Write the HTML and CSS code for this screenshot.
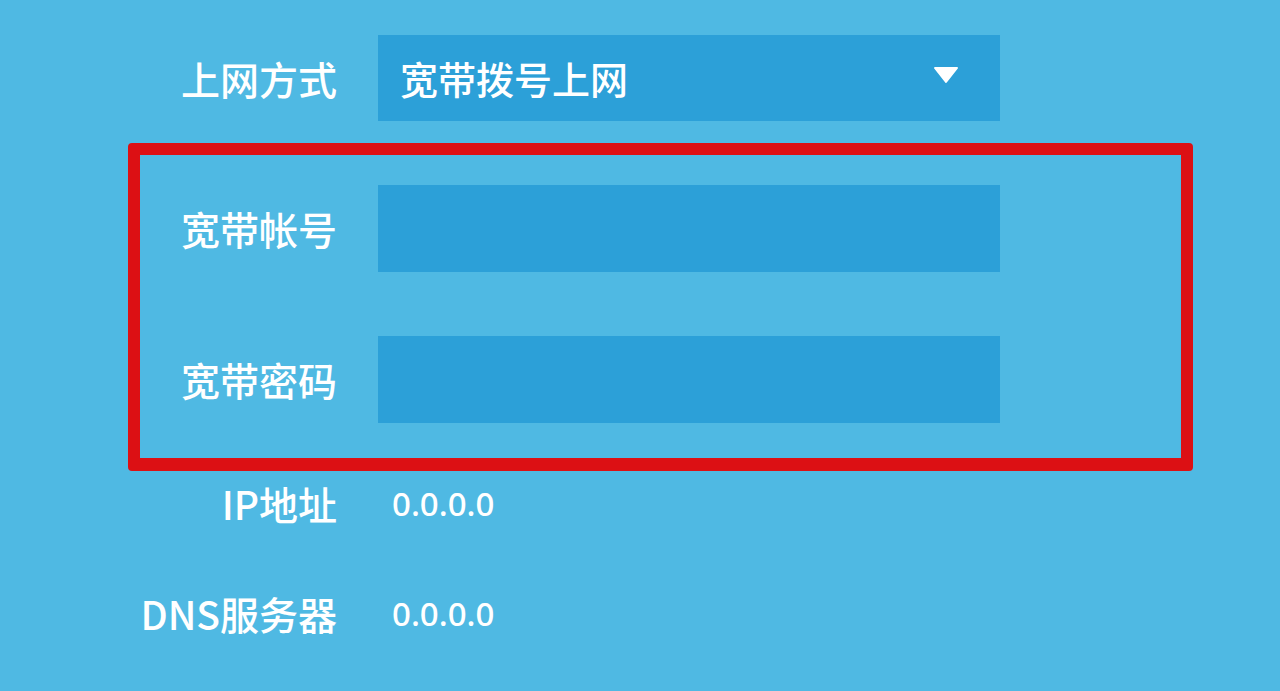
FILE: index.html
```html
<!DOCTYPE html>
<html lang="zh-CN">
<head>
<meta charset="utf-8">
<title>上网设置</title>
<link rel="stylesheet" href="styles.css">
</head>
<body>
<main class="page">
  <div class="row row-out">
    <div class="label">上网方式</div>
    <div class="field select">
      <span class="select-text">宽带拨号上网</span>
      <svg class="caret" width="26" height="18" viewBox="0 0 26 18" aria-hidden="true">
        <path d="M2 2 L24 2 L13 16 Z" fill="#ffffff" stroke="#ffffff" stroke-width="2" stroke-linejoin="round"/>
      </svg>
    </div>
  </div>

  <section class="highlight">
    <div class="row row-in">
      <div class="label">宽带帐号</div>
      <div class="field input"></div>
    </div>
    <div class="row row-in">
      <div class="label">宽带密码</div>
      <div class="field input"></div>
    </div>
  </section>

  <div class="row row-out info first">
    <div class="label">IP地址</div>
    <div class="value">0.0.0.0</div>
  </div>
  <div class="row row-out info">
    <div class="label">DNS服务器</div>
    <div class="value">0.0.0.0</div>
  </div>
</main>
</body>
</html>
```
FILE: styles.css
```css
html, body {
  margin: 0;
  padding: 0;
}
body {
  width: 1280px;
  height: 691px;
  overflow: hidden;
  background: #4fb9e3;
  font-family: "Noto Sans CJK SC", "Noto Sans", sans-serif;
  color: #ffffff;
}
.page {
  padding-top: 35px;
}
.row {
  display: flex;
  align-items: center;
  gap: 41px;
}
.row-out {
  padding-left: 117px;
}
.row-out .label {
  width: 220px;
}
.row-in .label {
  width: 197px;
}
.label {
  text-align: right;
  font-size: 39px;
  font-weight: 500;
  line-height: 1;
  white-space: nowrap;
}
.field {
  width: 622px;
  height: 86px;
  background: #2ca0d8;
  box-sizing: border-box;
}
.select {
  display: flex;
  align-items: center;
  justify-content: space-between;
  padding-left: 22px;
  padding-right: 41px;
}
.select-text {
  font-size: 38px;
  font-weight: 500;
  line-height: 1;
}
.caret {
  display: block;
  margin-top: -6px;
}
.highlight {
  margin: 22px 0 0 128px;
  width: 1065px;
  box-sizing: border-box;
  border: 12px solid #dc1014;
  border-bottom-width: 13px;
  border-radius: 4px;
  padding: 30px 0 35px 0;
  display: flex;
  flex-direction: column;
  gap: 64px;
}
.highlight .field {
  height: 87px;
}
.info {
  height: 60px;
  margin-top: 50px;
  gap: 55px;
}
.info.first {
  margin-top: 2px;
}
.value {
  font-family: "Noto Sans", sans-serif;
  font-size: 33px;
  font-weight: 500;
  line-height: 1;
}
```
